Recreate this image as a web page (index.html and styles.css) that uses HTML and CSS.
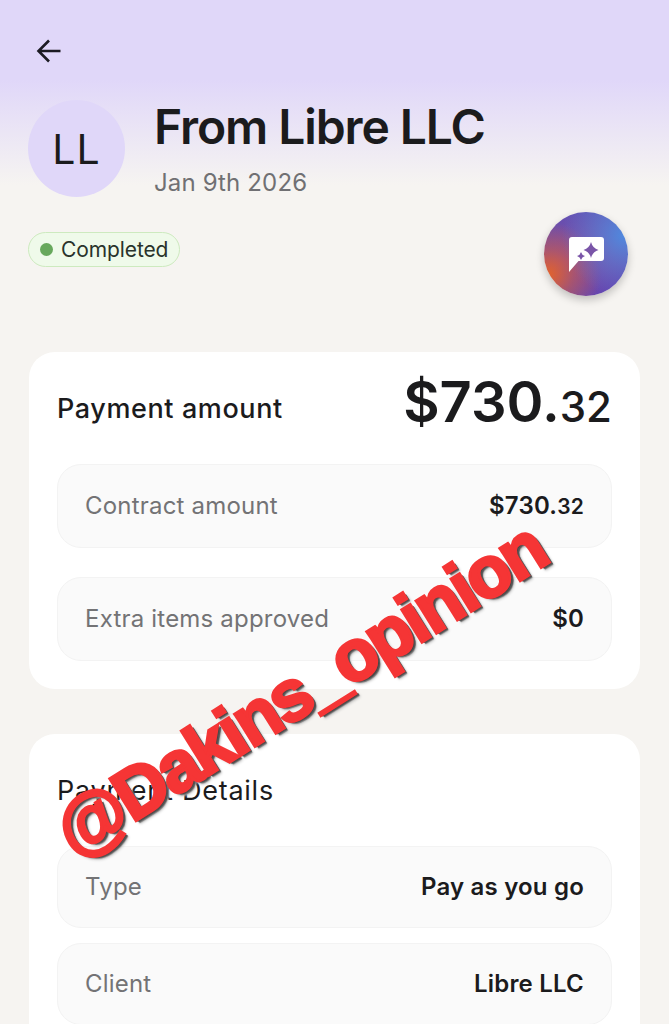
FILE: index.html
```html
<!DOCTYPE html>
<html lang="en">

<head>
    <meta charset="UTF-8">
    <meta name="viewport" content="width=device-width, initial-scale=1.0">
    <title>Payment</title>
    <link rel="stylesheet" href="styles.css">
</head>

<body>

    <header class="top">
        <button class="back" aria-label="Back">
            <svg width="26" height="24" viewBox="0 0 26 24" fill="none" stroke="#1c1b23" stroke-width="2.6">
                <path d="M24.5 12H3M13 1.5 2.5 12 13 22.5" />
            </svg>
        </button>

        <div class="from">
            <div class="avatar">LL</div>
            <div>
                <h1>From Libre LLC</h1>
                <p class="date">Jan 9th 2026</p>
            </div>
        </div>

        <div class="status-row">
            <span class="badge"><i class="dot"></i>Completed</span>
            <button class="chat" aria-label="Assistant">
                <svg width="35" height="35" viewBox="0 0 35 35">
                    <path fill="#fff" d="M3 0h29q3 0 3 3v18q0 3-3 3H9.500L0 35V3q0-3 3-3z" />
                    <path fill="#7a55a8" d="M22 5q1.500 6 7.500 8q-6 2-7.500 8q-1.500-6-7.500-8q6-2 7.500-8z" />
                    <path fill="#7a55a8" d="M12 15q.8 3.200 4 4q-3.200.8-4 4q-.8-3.200-4-4q3.200-.8 4-4z" />
                </svg>
            </button>
        </div>
    </header>

    <main class="cards">
        <section class="card">
            <div class="card-head">
                <h2>Payment amount</h2>
                <div class="total">$730.<small>32</small></div>
            </div>
            <div class="row">
                <span>Contract amount</span>
                <b>$730.<small>32</small></b>
            </div>
            <div class="row">
                <span>Extra items approved</span>
                <b>$0</b>
            </div>
        </section>

        <section class="card">
            <h2 class="details-title">Payment Details</h2>
            <div class="row short">
                <span>Type</span>
                <b>Pay as you go</b>
            </div>
            <div class="row short">
                <span>Client</span>
                <b>Libre LLC</b>
            </div>
        </section>
    </main>

    <div class="watermark">@Dakins_opinion</div>

</body>

</html>
```

FILE: styles.css
```css
html,
body {
    height: 1024px;
    overflow: hidden;
}

body {
    position: relative;
    margin: 0;
    background: linear-gradient(#e0d7f9 0, #e0d7f9 80px, #f6f4f1 185px);
    font-family: Inter, "Liberation Sans", sans-serif;
    color: #1b1b1d;
}

.top {
    padding: 39px 28px 0;
}

.back {
    display: block;
    width: 26px;
    height: 24px;
    margin-left: 8px;
    padding: 0;
    border: none;
    background: none;
}

.from {
    display: flex;
    gap: 29px;
    margin-top: 37px;
}

.avatar {
    display: flex;
    align-items: center;
    justify-content: center;
    width: 97px;
    height: 97px;
    border-radius: 50%;
    background-color: #e0d7f9;
    font-size: 41px;
    letter-spacing: 1px;
}

h1 {
    margin: 0;
    font-size: 48px;
    line-height: 54px;
    font-weight: 600;
    letter-spacing: -1.1px;
}

.date {
    margin: 14px 0 0;
    font-size: 24px;
    line-height: 30px;
    letter-spacing: 0.15px;
    color: #707073;
}

.status-row {
    display: flex;
    align-items: flex-start;
    justify-content: space-between;
    padding-right: 13px;
    margin-top: 14px;
}

.badge {
    box-sizing: border-box;
    display: flex;
    align-items: center;
    gap: 8px;
    height: 35px;
    margin-top: 20px;
    padding: 0 11px;
    border: 1px solid #cdeabf;
    border-radius: 18px;
    background-color: #effaea;
    font-size: 21px;
    letter-spacing: -0.1px;
    color: #29332b;
}

.dot {
    width: 13px;
    height: 13px;
    border-radius: 50%;
    background-color: #67a85c;
}

.chat {
    display: flex;
    align-items: center;
    justify-content: center;
    width: 84px;
    height: 84px;
    padding: 0;
    border: none;
    border-radius: 50%;
    background:
        radial-gradient(circle at 95% 28%, #4f88de 0, rgba(79, 136, 222, 0) 62%),
        radial-gradient(circle at 6% 74%, #e0622f 0, rgba(224, 98, 47, 0.45) 24%, rgba(224, 98, 47, 0) 52%),
        linear-gradient(160deg, #5c50b6, #8a4a9c 50%, #5a45b6);
    box-shadow: 0 4px 9px rgba(0, 0, 0, 0.22);
}

.cards {
    display: flex;
    flex-direction: column;
    gap: 45px;
    margin: 56px 29px 0;
}

.card {
    padding: 0 28px 28px;
    border-radius: 26px;
    background-color: #fff;
}

.card-head {
    display: flex;
    align-items: center;
    justify-content: space-between;
    height: 112px;
}

h2 {
    margin: 0;
    font-size: 27px;
    font-weight: 500;
    letter-spacing: 0.6px;
}

.total {
    padding-bottom: 12px;
    font-size: 56px;
    font-weight: 600;
}

.total small {
    font-size: 42px;
    font-weight: 500;
}

.row {
    box-sizing: border-box;
    display: flex;
    align-items: center;
    justify-content: space-between;
    height: 84px;
    padding: 0 27px 1px;
    border: 1px solid #f3f3f3;
    border-radius: 24px;
    background-color: #fafafa;
    font-size: 24px;
    letter-spacing: 0.2px;
    color: #737375;
}

.row + .row {
    margin-top: 29px;
}

.row b {
    font-weight: 600;
    color: #1b1b1d;
}

.row small {
    font-size: 21px;
}

.details-title {
    padding: 39px 0 38px;
    line-height: 35px;
    font-weight: 400;
    letter-spacing: 0.75px;
}

.short {
    height: 82px;
}

.short + .short {
    margin-top: 15px;
}

.watermark {
    position: absolute;
    left: 19px;
    top: 648px;
    transform: rotate(-32deg);
    font-family: "Liberation Sans", sans-serif;
    font-size: 72px;
    font-weight: 700;
    letter-spacing: -3px;
    white-space: nowrap;
    color: #f53535;
    -webkit-text-stroke: 3px #f53535;
    text-shadow: 1px 2px 0 #444, 2px 3px 0 #555, 2px 4px 1px #777, 2px 5px 3px #bbb;
}
```
